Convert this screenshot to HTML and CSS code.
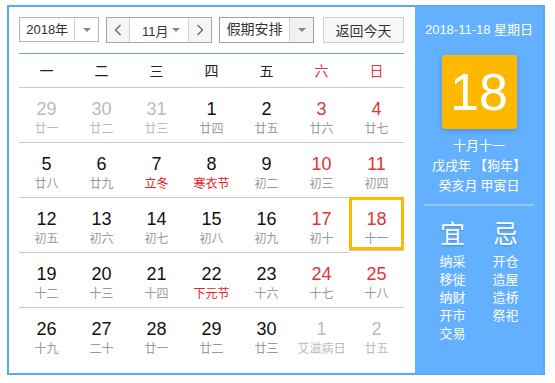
FILE: index.html
```html
<!DOCTYPE html>
<html lang="zh-CN">
<head>
    <meta charset="UTF-8">
    <title>万年历</title>
    <link rel="stylesheet" href="styles.css">
</head>
<body>

    <div class="calendar">
        <div class="main">
            <div class="toolbar">
                <div class="select year-select">
                    <span class="select-text">2018年</span>
                    <span class="select-arrow"><i class="caret"></i></span>
                </div>
                <div class="month-group">
                    <button class="nav-btn">
                        <svg width="8" height="12" viewBox="0 0 8 12"><path d="M6.5 1 L1.5 6 L6.5 11" fill="none" stroke="#666" stroke-width="1.3"/></svg>
                    </button>
                    <div class="month-select">
                        <span>11月</span>
                        <i class="caret"></i>
                    </div>
                    <button class="nav-btn">
                        <svg width="8" height="12" viewBox="0 0 8 12"><path d="M1.5 1 L6.5 6 L1.5 11" fill="none" stroke="#666" stroke-width="1.3"/></svg>
                    </button>
                </div>
                <div class="select holiday-select">
                    <span class="select-text">假期安排</span>
                    <span class="select-arrow grey"><i class="caret"></i></span>
                </div>
                <button class="today-btn">返回今天</button>
            </div>

            <div class="week-head">
                <span>一</span><span>二</span><span>三</span><span>四</span><span>五</span>
                <span class="red">六</span><span class="red">日</span>
            </div>

            <div class="days">
                <div class="day other"><b>29</b><small>廿一</small></div>
                <div class="day other"><b>30</b><small>廿二</small></div>
                <div class="day other"><b>31</b><small>廿三</small></div>
                <div class="day"><b>1</b><small>廿四</small></div>
                <div class="day"><b>2</b><small>廿五</small></div>
                <div class="day weekend"><b>3</b><small>廿六</small></div>
                <div class="day weekend"><b>4</b><small>廿七</small></div>

                <div class="day"><b>5</b><small>廿八</small></div>
                <div class="day"><b>6</b><small>廿九</small></div>
                <div class="day"><b>7</b><small class="fest">立冬</small></div>
                <div class="day"><b>8</b><small class="fest">寒衣节</small></div>
                <div class="day"><b>9</b><small>初二</small></div>
                <div class="day weekend"><b>10</b><small>初三</small></div>
                <div class="day weekend"><b>11</b><small>初四</small></div>

                <div class="day"><b>12</b><small>初五</small></div>
                <div class="day"><b>13</b><small>初六</small></div>
                <div class="day"><b>14</b><small>初七</small></div>
                <div class="day"><b>15</b><small>初八</small></div>
                <div class="day"><b>16</b><small>初九</small></div>
                <div class="day weekend"><b>17</b><small>初十</small></div>
                <div class="day weekend today"><b>18</b><small>十一</small></div>

                <div class="day"><b>19</b><small>十二</small></div>
                <div class="day"><b>20</b><small>十三</small></div>
                <div class="day"><b>21</b><small>十四</small></div>
                <div class="day"><b>22</b><small class="fest">下元节</small></div>
                <div class="day"><b>23</b><small>十六</small></div>
                <div class="day weekend"><b>24</b><small>十七</small></div>
                <div class="day weekend"><b>25</b><small>十八</small></div>

                <div class="day"><b>26</b><small>十九</small></div>
                <div class="day"><b>27</b><small>二十</small></div>
                <div class="day"><b>28</b><small>廿一</small></div>
                <div class="day"><b>29</b><small>廿二</small></div>
                <div class="day"><b>30</b><small>廿三</small></div>
                <div class="day other"><b>1</b><small>艾滋病日</small></div>
                <div class="day other"><b>2</b><small>廿五</small></div>
            </div>
        </div>

        <div class="side">
            <div class="side-date">2018-11-18 星期日</div>
            <div class="big-day">18</div>
            <div class="lunar">
                <p>十月十一</p>
                <p>戊戌年 【狗年】</p>
                <p>癸亥月 甲寅日</p>
            </div>
            <div class="side-line"></div>
            <div class="almanac">
                <div class="almanac-col">
                    <h3>宜</h3>
                    <p>纳采</p>
                    <p>移徙</p>
                    <p>纳财</p>
                    <p>开市</p>
                    <p>交易</p>
                </div>
                <div class="almanac-col">
                    <h3>忌</h3>
                    <p>开仓</p>
                    <p>造屋</p>
                    <p>造桥</p>
                    <p>祭祀</p>
                </div>
            </div>
        </div>
    </div>

</body>
</html>
```

FILE: styles.css
```css
* {
    margin: 0;
    padding: 0;
    box-sizing: border-box;
}

body {
    font-family: "Liberation Sans", "Noto Sans CJK SC", sans-serif;
    background: #fff;
    color: #000;
    padding: 5px 7px;
}

.calendar {
    display: flex;
    width: 538px;
    height: 370px;
    border: 2px solid #58a8f8;
}

/* left part */
.main {
    width: 406px;
    padding: 10px 11px 0 10px;
}

.toolbar {
    display: flex;
    align-items: flex-start;
    height: 26px;
}

.select {
    display: flex;
    height: 25px;
    border: 1px solid #b4b4b4;
    background: #fff;
    font-size: 13px;
    line-height: 23px;
    color: #333;
}

.select-text {
    text-align: center;
}

.select-arrow {
    display: flex;
    align-items: center;
    justify-content: center;
    border-left: 1px solid #d0d0d0;
}

.select-arrow.grey {
    background: #f2f2f2;
}

.caret {
    display: inline-block;
    width: 0;
    height: 0;
    border-left: 4px solid transparent;
    border-right: 4px solid transparent;
    border-top: 4px solid #888;
}

.year-select {
    width: 80px;
}

.year-select .select-text {
    width: 55px;
}

.year-select .select-arrow {
    width: 24px;
}

.month-group {
    display: flex;
    height: 26px;
    margin-left: 7px;
    border: 1px solid #a8a8a8;
    font-size: 13px;
    color: #333;
}

.nav-btn {
    width: 22px;
    height: 24px;
    border: none;
    background: #f6f6f6;
    display: flex;
    align-items: center;
    justify-content: center;
}

.month-select {
    width: 60px;
    display: flex;
    align-items: center;
    justify-content: space-between;
    padding: 0 8px 0 12px;
    border-left: 1px solid #d4d4d4;
    border-right: 1px solid #d4d4d4;
    background: #fff;
}

.holiday-select {
    width: 95px;
    margin-left: 7px;
    height: 26px;
    border-color: #a0a0a0;
    font-size: 14px;
}

.holiday-select .select-text {
    width: 70px;
}

.holiday-select .select-arrow {
    width: 24px;
}

.today-btn {
    width: 82px;
    height: 26px;
    margin-left: 9px;
    border: 1px solid #cfcfcf;
    background: #f7f7f7;
    font-family: "Liberation Sans", "Noto Sans CJK SC", sans-serif;
    font-size: 14px;
    color: #333;
}

.week-head {
    display: grid;
    grid-template-columns: repeat(7, 55px);
    margin-top: 10px;
    height: 35px;
    border-top: 1px solid #5aa9f7;
    border-bottom: 1px solid #c8c8c8;
    font-family: "Noto Sans CJK SC", sans-serif;
    font-size: 14px;
    line-height: 33px;
    text-align: center;
    color: #222;
}

.red {
    color: #e0373f;
}

.days {
    display: grid;
    grid-template-columns: repeat(7, 55px);
    grid-auto-rows: 55px;
}

.day {
    display: flex;
    flex-direction: column;
    align-items: center;
    padding-top: 10px;
    border-bottom: 1px solid #c8c8c8;
}

.day:nth-last-child(-n+7) {
    border-bottom: none;
}

.day b {
    font-weight: normal;
    font-size: 18px;
    line-height: 22px;
    color: #111;
}

.day small {
    font-family: "Noto Sans CJK SC", sans-serif;
    font-size: 12px;
    line-height: 16px;
    color: #999;
}

.day.weekend b {
    color: #e53238;
}

.day.other b,
.day.other small {
    color: #bbb;
}

.day small.fest {
    color: #e52222;
}

.day.today {
    box-shadow: inset 0 0 0 3px #ffba00;
    height: 54px;
    margin-top: -1px;
    padding-top: 11px;
}

/* right part */
.side {
    flex: 1;
    background: #63b0ff;
    color: #fff;
    display: flex;
    flex-direction: column;
    align-items: center;
    padding-top: 14px;
    font-family: "Noto Sans CJK SC", sans-serif;
}

.side-date {
    font-family: "Liberation Sans", "Noto Sans CJK SC", sans-serif;
    font-size: 13px;
    line-height: 18px;
}

.big-day {
    width: 75px;
    height: 74px;
    margin-top: 16px;
    background: #ffb800;
    border-radius: 3px;
    box-shadow: 0 2px 4px rgba(0, 60, 140, 0.25);
    font-family: "Liberation Sans", sans-serif;
    font-size: 52px;
    line-height: 74px;
    text-align: center;
}

.lunar {
    margin-top: 6px;
    text-align: center;
    font-size: 13px;
    line-height: 20px;
}

.side-line {
    width: 110px;
    height: 2px;
    margin-top: 9px;
    background: rgba(255, 255, 255, 0.3);
}

.almanac {
    display: grid;
    grid-template-columns: 53px 53px;
    margin-top: 11px;
}

.almanac-col {
    text-align: center;
}

.almanac-col h3 {
    font-weight: normal;
    font-size: 25px;
    line-height: 30px;
    margin-bottom: 5px;
    text-shadow: 0 1px 2px rgba(0, 60, 140, 0.3);
}

.almanac-col p {
    font-size: 13px;
    line-height: 18px;
}
```
